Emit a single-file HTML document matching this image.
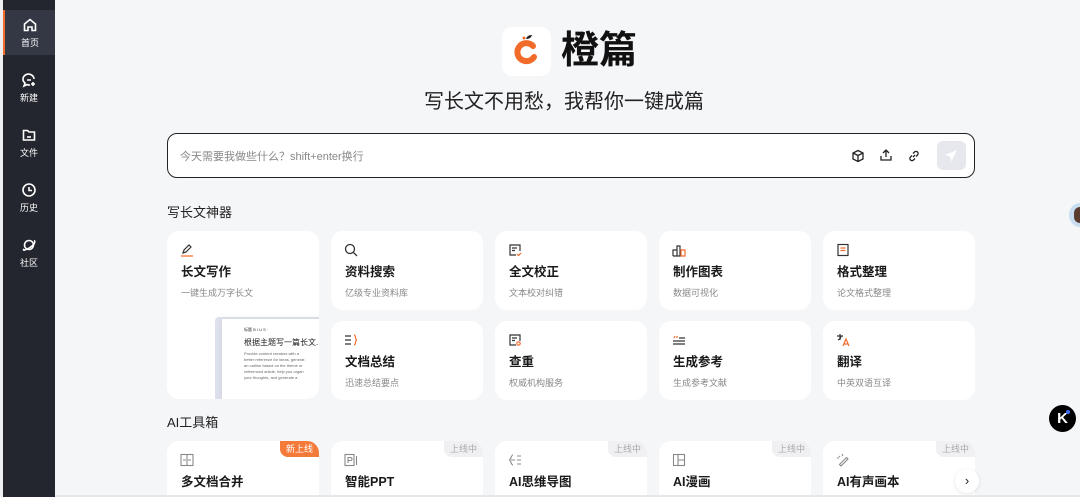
<!DOCTYPE html>
<html style="overflow:hidden;width:1080px;height:497px"><head><meta charset="utf-8">
<style>
*{box-sizing:border-box;margin:0;padding:0}
body{width:1080px;height:497px;overflow:hidden;background:#f5f6f8;font-family:"Liberation Sans","Noto Sans CJK SC",sans-serif;position:relative}
#wrap{position:absolute;left:0;top:0;width:1080px;height:497px;overflow:hidden}
.side{position:absolute;left:0;top:0;width:55px;height:497px;background:#23262e;border-left:3px solid #eeeff2}
.nav{position:absolute;left:0;width:52px;height:45px;color:#fff;font-size:9px;text-align:center}
.nav svg{display:block;margin:7px auto 3px}
.nav.act{background:#333844;border-left:2px solid #f26b2a}
.logo{position:absolute;left:502px;top:27px;width:49px;height:49px;background:#fff;border-radius:10px}
.brand{position:absolute;left:561px;top:26px;font-size:38px;font-weight:bold;color:#111;line-height:50px}
.slogan{position:absolute;left:424px;top:88px;font-size:20px;color:#222;line-height:28px}
.input{position:absolute;left:167px;top:133px;width:808px;height:45px;background:#fff;border:1.5px solid #222;border-radius:10px}
.input .ph{position:absolute;left:12px;top:14px;font-size:11px;color:#888}
.send{position:absolute;right:8px;top:7px;width:29px;height:29px;background:#e6e8ee;border-radius:6px}
.h{position:absolute;left:167px;font-size:13px;color:#222}
.card{position:absolute;width:152px;height:79px;background:#fff;border-radius:12px;overflow:hidden}
.card svg.ic{position:absolute;left:13px;top:12px}
.card b{position:absolute;left:14px;top:30px;font-size:12.5px;color:#1a1a1a}
.card i{position:absolute;left:14px;top:55px;font-size:9px;color:#888;font-style:normal}
.tag{position:absolute;right:0;top:0;height:16px;padding:0 6px;font-size:9px;line-height:16px;border-bottom-left-radius:8px;background:#f0f0f2;color:#aaa}
.tag.new{background:#f47a3a;color:#fff}
</style></head><body><div id="wrap">
<div class="side">
 <div class="nav act" style="top:10px"><svg width="16" height="16" viewBox="0 0 16 16" fill="none" stroke="#fff" stroke-width="1.6"><path d="M2.5 7L8 2.5 13.5 7v6.5h-3.5V10H6v3.5H2.5z"/></svg>首页</div>
 <div class="nav" style="top:65px"><svg width="16" height="16" viewBox="0 0 16 16" fill="none" stroke="#fff" stroke-width="1.6"><path d="M13 7a5.5 5 0 1 0-9 4l-1 3 3-1.5a6 6 0 0 0 3 .5"/><path d="M6 8h4M12 10v4M10 12h4"/></svg>新建</div>
 <div class="nav" style="top:120px"><svg width="16" height="16" viewBox="0 0 16 16" fill="none" stroke="#fff" stroke-width="1.6"><path d="M2.5 3.5h4l1.5 1.5h5.5v8h-11z"/><path d="M6 10h4"/></svg>文件</div>
 <div class="nav" style="top:175px"><svg width="16" height="16" viewBox="0 0 16 16" fill="none" stroke="#fff" stroke-width="1.6"><circle cx="8" cy="8" r="6"/><path d="M8 5v3.5h3"/></svg>历史</div>
 <div class="nav" style="top:230px"><svg width="16" height="16" viewBox="0 0 16 16" fill="none" stroke="#fff" stroke-width="1.6"><circle cx="8" cy="8" r="4.5"/><path d="M3 12c-2 2 2 1 6-1.5s6-6 4-7"/></svg>社区</div>
</div>
<div class="logo"><svg width="49" height="49" viewBox="0 0 49 49"><path d="M31 19a9 9 0 1 0 1 11" fill="none" stroke="#f26b2a" stroke-width="6" stroke-linecap="round"/><path d="M24 12c1-3 3-4 6-4-1 3-3 4-6 4z" fill="#222"/><circle cx="22" cy="11" r="1.5" fill="#f26b2a"/></svg></div>
<div class="brand">橙篇</div>
<div class="slogan">写长文不用愁，我帮你一键成篇</div>
<div class="input"><div class="ph">今天需要我做些什么？shift+enter换行</div>
 <svg style="position:absolute;left:683px;top:15px" width="14" height="14" viewBox="0 0 14 14" fill="none" stroke="#222" stroke-width="1.3"><path d="M7 1.5l5 2.5v6L7 12.5 2 10V4zM2 4l5 2.5L12 4M7 6.5v6"/></svg>
 <svg style="position:absolute;left:711px;top:14px" width="14" height="14" viewBox="0 0 14 14" fill="none" stroke="#222" stroke-width="1.3"><path d="M7 9V2M4 5l3-3 3 3M2 8v4h10V8"/></svg>
 <svg style="position:absolute;left:739px;top:15px" width="14" height="14" viewBox="0 0 14 14" fill="none" stroke="#222" stroke-width="1.3"><path d="M6 8l2-2M5 6.5L3.5 8a2 2 0 0 0 3 3L8 9.5M9 7.5l1.5-1.5a2 2 0 0 0-3-3L6 4.5"/></svg>
 <div class="send"><svg width="29" height="29" viewBox="0 0 29 29"><path d="M20 9l-12 5 5 1.5 1.5 5z" fill="#fff"/></svg></div>
</div>
<div class="h" style="top:202px">写长文神器</div>
<div class="card" style="left:167px;top:231px;height:168px"><svg class="ic" width="14" height="14" viewBox="0 0 14 14" fill="none" stroke="#333" stroke-width="1.2"><path d="M3 10l1-3 5-5 2 2-5 5z"/><path d="M1 13h12" stroke="#f26b2a"/></svg><b>长文写作</b><i>一键生成万字长文</i>
 <div style="position:absolute;left:48px;top:86px;width:110px;height:90px;background:#dfe2ee;border-radius:4px"></div>
 <div style="position:absolute;left:55px;top:88px;width:110px;height:90px;background:#fff;box-shadow:0 0 8px rgba(0,0,0,.08);font-size:4px;color:#666;padding:8px 0 0 22px;line-height:6px">
  <div style="color:#333">标题 B I U S ·</div><div style="font-size:8px;color:#222;margin:5px 0 3px;line-height:10px">根据主题写一篇长文...</div>Provide content creators with a<br>better reference for ideas, generat<br>an outline based on the theme or<br>referenced article, help you organ<br>your thoughts, and generate a</div>
</div>
<div class="card" style="left:331px;top:231px"><svg class="ic" width="14" height="14" viewBox="0 0 14 14" fill="none" stroke="#333" stroke-width="1.3"><circle cx="6" cy="6" r="4.5"/><path d="M9.5 9.5L13 13"/></svg><b>资料搜索</b><i>亿级专业资料库</i></div>
<div class="card" style="left:495px;top:231px"><svg class="ic" width="14" height="14" viewBox="0 0 14 14" fill="none" stroke="#333" stroke-width="1.2"><path d="M8 12H2V2h10v6M4 5h5M4 7.5h3"/><path d="M9 11l1.5 1.5L13 10" stroke="#f26b2a"/></svg><b>全文校正</b><i>文本校对纠错</i></div>
<div class="card" style="left:659px;top:231px"><svg class="ic" width="14" height="14" viewBox="0 0 14 14" fill="none" stroke="#333" stroke-width="1.2"><path d="M1 13h7V3H5v10M1 13V7h4"/><path d="M9 7h4v6H9z" stroke="#f26b2a"/></svg><b>制作图表</b><i>数据可视化</i></div>
<div class="card" style="left:823px;top:231px"><svg class="ic" width="14" height="14" viewBox="0 0 14 14" fill="none" stroke="#333" stroke-width="1.2"><rect x="2" y="1.5" width="10" height="11"/><path d="M4.5 5h5M4.5 7.5h5" stroke="#f26b2a"/></svg><b>格式整理</b><i>论文格式整理</i></div>
<div class="card" style="left:331px;top:321px"><svg class="ic" width="14" height="14" viewBox="0 0 14 14" fill="none" stroke="#333" stroke-width="1.2"><path d="M1 3h6M1 7h6M1 11h6"/><path d="M10 2c2 0 1 5 3 5-2 0-1 5-3 5" stroke="#f26b2a"/></svg><b>文档总结</b><i>迅速总结要点</i></div>
<div class="card" style="left:495px;top:321px"><svg class="ic" width="14" height="14" viewBox="0 0 14 14" fill="none" stroke="#333" stroke-width="1.2"><path d="M8 12H2V2h10v6M4 5h5M4 7.5h3"/><circle cx="10.5" cy="10.5" r="1.7" stroke="#f26b2a"/></svg><b>查重</b><i>权威机构服务</i></div>
<div class="card" style="left:659px;top:321px"><svg class="ic" width="14" height="14" viewBox="0 0 14 14" fill="none" stroke="#333" stroke-width="1.2"><path d="M1 8h12M1 11h12M7 5h6"/><path d="M2 5l1-2M4.5 5l1-2" stroke="#f26b2a"/></svg><b>生成参考</b><i>生成参考文献</i></div>
<div class="card" style="left:823px;top:321px"><svg class="ic" width="14" height="14" viewBox="0 0 14 14" fill="none" stroke="#333" stroke-width="1.2"><path d="M1 3h6M4 1v6M2 7c2-1 3-2 3-4"/><path d="M7 13l3-7 3 7M8 11h4" stroke="#f26b2a"/></svg><b>翻译</b><i>中英双语互译</i></div>
<div class="h" style="top:412px">AI工具箱</div>
<div class="card" style="left:167px;top:441px"><div class="tag new">新上线</div><svg class="ic" width="14" height="14" viewBox="0 0 14 14" fill="none" stroke="#888" stroke-width="1.1"><rect x="1" y="1.5" width="12" height="11"/><path d="M7 1.5v11M3 7h3M11 7H8"/></svg><b>多文档合并</b></div>
<div class="card" style="left:331px;top:441px"><div class="tag">上线中</div><svg class="ic" width="14" height="14" viewBox="0 0 14 14" fill="none" stroke="#888" stroke-width="1.1"><rect x="1" y="1.5" width="9" height="11"/><path d="M12.5 3v9M4 10V4.5h2.5a1.5 1.5 0 0 1 0 3H4"/></svg><b>智能PPT</b></div>
<div class="card" style="left:495px;top:441px"><div class="tag">上线中</div><svg class="ic" width="14" height="14" viewBox="0 0 14 14" fill="none" stroke="#888" stroke-width="1.1"><path d="M5 2C3 2 3 7 1 7c2 0 2 5 4 5M3 7h4M9 3h4M9 7h4M9 11h4"/></svg><b>AI思维导图</b></div>
<div class="card" style="left:659px;top:441px"><div class="tag">上线中</div><svg class="ic" width="14" height="14" viewBox="0 0 14 14" fill="none" stroke="#888" stroke-width="1.1"><rect x="1.5" y="1.5" width="11" height="11"/><path d="M6 1.5v11M6 7h6.5"/></svg><b>AI漫画</b></div>
<div class="card" style="left:823px;top:441px"><div class="tag">上线中</div><svg class="ic" width="14" height="14" viewBox="0 0 14 14" fill="none" stroke="#888" stroke-width="1.1"><path d="M5 13l7-7-1.5-1.5-7 7zM3 3l1 1M1 5h2M6 1l1 2"/></svg><b>AI有声画本</b></div>
<div style="position:absolute;left:955px;top:469px;width:24px;height:24px;border-radius:50%;background:#fff;box-shadow:0 1px 4px rgba(0,0,0,.1);text-align:center;line-height:24px;font-size:13px;color:#222">›</div>
<div style="position:absolute;left:1069px;top:203px;width:22px;height:24px;border-radius:50%;background:#c9ddf0"><div style="margin:4px 0 0 5px;width:12px;height:16px;border-radius:6px;background:#5a3b30"></div></div>
<div style="position:absolute;left:1049px;top:405px;width:27px;height:27px;border-radius:50%;background:#000;color:#fff;font-weight:bold;font-size:15px;text-align:center;line-height:27px">K<span style="position:absolute;right:6px;top:5px;width:4px;height:4px;border-radius:50%;background:#3b6cf6"></span></div>
<div style="position:absolute;left:55px;top:495px;width:1025px;height:2px;background:#e6e7ea"></div>
</div></body></html>
